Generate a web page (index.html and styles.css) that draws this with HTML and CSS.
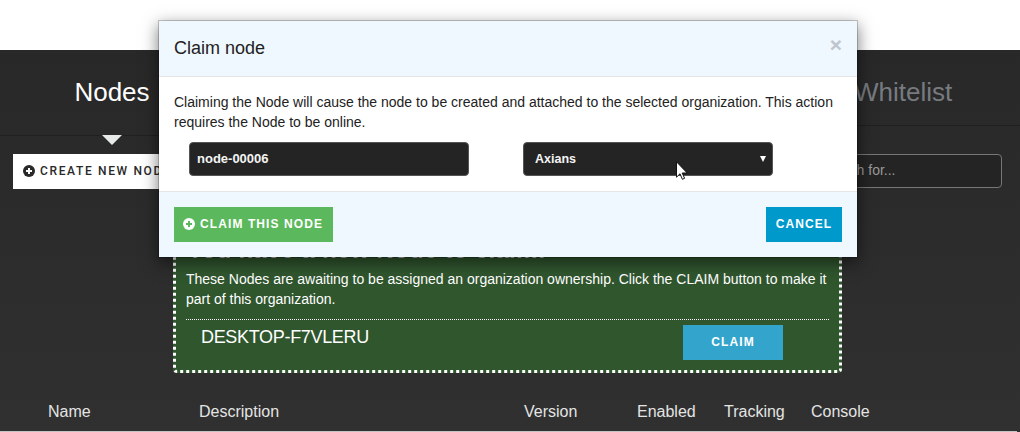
FILE: index.html
```html
<!DOCTYPE html>
<html lang="en">
<head>
<meta charset="utf-8">
<title>Nodes</title>
<link rel="stylesheet" href="styles.css">
</head>
<body>
<main class="page">
  <nav class="tabs">
    <div class="tab active">Nodes</div>
    <div class="tab whitelist">Whitelist</div>
  </nav>
  <div class="toolbar">
    <button class="btn create"><svg class="plus" viewBox="0 0 12 12"><circle cx="6" cy="6" r="6" fill="currentColor"/><path d="M6 3v6M3 6h6" stroke="#fff" stroke-width="2"/></svg><span>CREATE NEW NODE</span></button>
    <div class="search">Search for...</div>
  </div>
  <section class="notice">
    <h3>You have a new Node to claim!</h3>
    <p>These Nodes are awaiting to be assigned an organization ownership. Click the CLAIM button to make it<br>part of this organization.</p>
    <div class="claim-row"><span class="host">DESKTOP-F7VLERU</span><button class="btn claim">CLAIM</button></div>
  </section>
  <div class="columns"><span>Name</span><span>Description</span><span>Version</span><span>Enabled</span><span>Tracking</span><span>Console</span></div>
  <div class="rule"></div>
</main>
<div class="modal">
  <header class="modal-head"><h4>Claim node</h4><span class="close">×</span></header>
  <div class="modal-body">
    <p>Claiming the Node will cause the node to be created and attached to the selected organization. This action<br>requires the Node to be online.</p>
    <div class="fields">
      <div class="field name">node-00006</div>
      <div class="field org"><span>Axians</span><svg class="caret" viewBox="0 0 6 6"><path d="M0 0h6L3 6z" fill="#fff"/></svg></div>
    </div>
  </div>
  <footer class="modal-foot">
    <button class="btn confirm"><svg class="plus" viewBox="0 0 12 12"><circle cx="6" cy="6" r="6" fill="currentColor"/><path d="M6 3v6M3 6h6" stroke="#5cb85c" stroke-width="2"/></svg><span>CLAIM THIS NODE</span></button>
    <button class="btn cancel">CANCEL</button>
  </footer>
</div>
<svg class="cursor" viewBox="0 0 12 19"><path d="M.5.8v15.4l3.5-3.4 2.4 5.5 2.2-1-2.4-5.3h5z" fill="#fff" stroke="#111" stroke-width="1"/></svg>
</body>
</html>
```
FILE: styles.css
```css
* { box-sizing: border-box; }
body {
  margin: 0;
  width: 1020px;
  height: 432px;
  padding-top: 50px;
  overflow: hidden;
  position: relative;
  background: #fff;
  font: 14px/20px "Liberation Sans", Arial, sans-serif;
}
h3, h4, p { margin: 0; font-weight: 400; }
.page {
  height: 382px;
  display: flex;
  flex-direction: column;
  color: #fff;
  background: linear-gradient(#282828, #303030);
}
.tabs { display: flex; justify-content: space-between; height: 86px; font-size: 26px; line-height: 84px; }
.tab { position: relative; }
.active { width: 224px; text-align: center; border-bottom: 1px solid #202020; }
.active::after {
  content: "";
  position: absolute;
  left: 102px;
  top: 85px;
  border: 10px solid transparent;
  border-top-color: #e8eaea;
  border-bottom: 0;
}
.whitelist { width: 200px; height: 76px; padding-left: 34px; color: #777b80; border-bottom: 1px solid #202020; }
.toolbar { display: flex; justify-content: space-between; align-items: flex-start; padding: 18px 18px 0 13px; height: 96px; }
.btn {
  display: flex;
  align-items: center;
  justify-content: center;
  height: 35px;
  padding: 0 0 2px;
  border: 0;
  color: #fff;
  font: bold 12px/20px "Liberation Sans", Arial, sans-serif;
  letter-spacing: 1.1px;
  white-space: nowrap;
}
.plus { width: 12px; height: 12px; margin-right: 5px; flex: none; }
.create { width: 165px; color: #292929; background: #fff; font-family: Roboto, sans-serif; font-weight: 500; letter-spacing: 1.65px; justify-content: flex-start; padding-left: 10px; }
.search { width: 200px; height: 34px; padding: 5px 17px; border: 1px solid #777; border-radius: 4px; background: #242424; color: #999; }
.notice { width: 669px; height: 141px; margin-left: 173px; padding: 0 10px; background: #30562e; border: 3px dotted #fff; border-radius: 4px; }
.notice h3 { padding: 1px 0 6px 1px; font-size: 24px; font-weight: 700; line-height: 27px; letter-spacing: .3px; color: #eee; }
.notice p { height: 50px; }
.notice .claim-row { display: flex; align-items: flex-start; padding: 5px 46px 0 15px; border-top: 1px dotted #fff; }
.host { flex: 1; font-size: 18px; line-height: 24px; letter-spacing: -.32px; }
.claim { width: 100px; background: #33a5cc; }
.columns { display: grid; grid-template-columns: 151px 325px 113px 87px 87px 1fr; padding: 29px 0 0 48px; height: 58px; font-size: 16px; line-height: 20px; color: #e4e4e4; }
.rule { width: 1017px; height: 1px; background: #c4c4c4; }
.modal {
  position: absolute;
  left: 158px;
  top: 20px;
  width: 700px;
  height: 238px;
  border: 1px solid rgba(0, 0, 0, .2);
  background: #fff;
  background-clip: padding-box;
  box-shadow: 0 5px 15px rgba(0, 0, 0, .5);
  color: #222;
}
.modal-head { height: 56px; padding: 15px; display: flex; justify-content: space-between; border-bottom: 1px solid #e5e5e5; background: #eff7ff; }
h4 { font-size: 18px; line-height: 25px; }
.close { font-size: 21px; font-weight: 700; line-height: 17px; color: #bfc5cc; }
.modal-body { height: 114px; padding: 15px; }
.fields { display: flex; gap: 54px; padding: 10px 0 0 15px; }
.field { height: 34px; border: 1px solid #555; border-radius: 4px; background: #242424; color: #f4f4f4; font-weight: 700; font-size: 13px; line-height: 32px; }
.name { width: 280px; padding-left: 7px; }
.org { width: 250px; padding: 0 6px 0 11px; display: flex; justify-content: space-between; align-items: center; }
.org span { font-size: 12.5px; }
.caret { width: 6px; height: 6px; }
.modal-foot { height: 66px; padding: 15px; border-top: 1px solid #e5e5e5; background: #eff7ff; display: flex; justify-content: space-between; }
.confirm { width: 159px; background: #5cb85c; justify-content: flex-start; padding-left: 9px; }
.cancel { width: 76px; background: #09c; }
.cursor { position: absolute; left: 676px; top: 161px; width: 12px; height: 19px; }
```
